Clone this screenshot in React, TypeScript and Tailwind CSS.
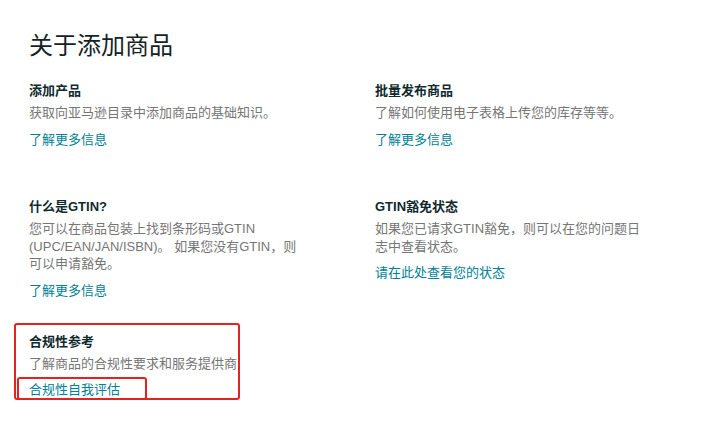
import React from 'react';

type Item = {
    title: string;
    desc: string;
    link: string;
    marked?: boolean;
};

const items: Item[] = [
    { title: '添加产品', desc: '获取向亚马逊目录中添加商品的基础知识。', link: '了解更多信息' },
    { title: '批量发布商品', desc: '了解如何使用电子表格上传您的库存等等。', link: '了解更多信息' },
    {
        title: '什么是GTIN?',
        desc: '您可以在商品包装上找到条形码或GTIN\u200B(UPC/EAN/JAN/ISBN)。 如果您没有GTIN，则可以申请豁免。',
        link: '了解更多信息',
    },
    { title: 'GTIN豁免状态', desc: '如果您已请求GTIN豁免，则可以在您的问题日志中查看状态。', link: '请在此处查看您的状态' },
    { title: '合规性参考', desc: '了解商品的合规性要求和服务提供商', link: '合规性自我评估', marked: true },
];

export default function App() {
    return (
        <div className="h-[426px] w-full overflow-hidden bg-white pl-[29px] pt-[30px] font-['Liberation_Sans','Noto_Sans_CJK_SC',sans-serif]">
            <h1 className="text-[24px] leading-[32px] font-normal text-[#142426]">关于添加商品</h1>

            <div className="mt-[19px] grid grid-cols-[346px_1fr]">
                {items.map((item, index) => (
                    <div key={index} className="relative min-h-[116px] pb-[31px]">
                        {/* annotation boxes */}
                        {item.marked && (
                            <>
                                <div className="pointer-events-none absolute -left-[15px] -top-[9px] h-[77px] w-[226px] rounded-[3px] border-[2.5px] border-[#e3231f]" />
                                <div className="pointer-events-none absolute -left-[12px] top-[45px] h-[23px] w-[130px] rounded-[3px] border-[2.5px] border-[#e3231f]" />
                            </>
                        )}
                        <h3 className="text-[13px] leading-[20px] font-bold text-[#0f2a2d]">{item.title}</h3>
                        <p className="mt-[3px] max-w-[272px] text-[13px] leading-[17.5px] text-[#767676]">{item.desc}</p>
                        <a href="#" className="mt-[8px] block text-[13px] leading-[20px] text-[#008296]">
                            {item.link}
                        </a>
                    </div>
                ))}
            </div>
        </div>
    );
}
